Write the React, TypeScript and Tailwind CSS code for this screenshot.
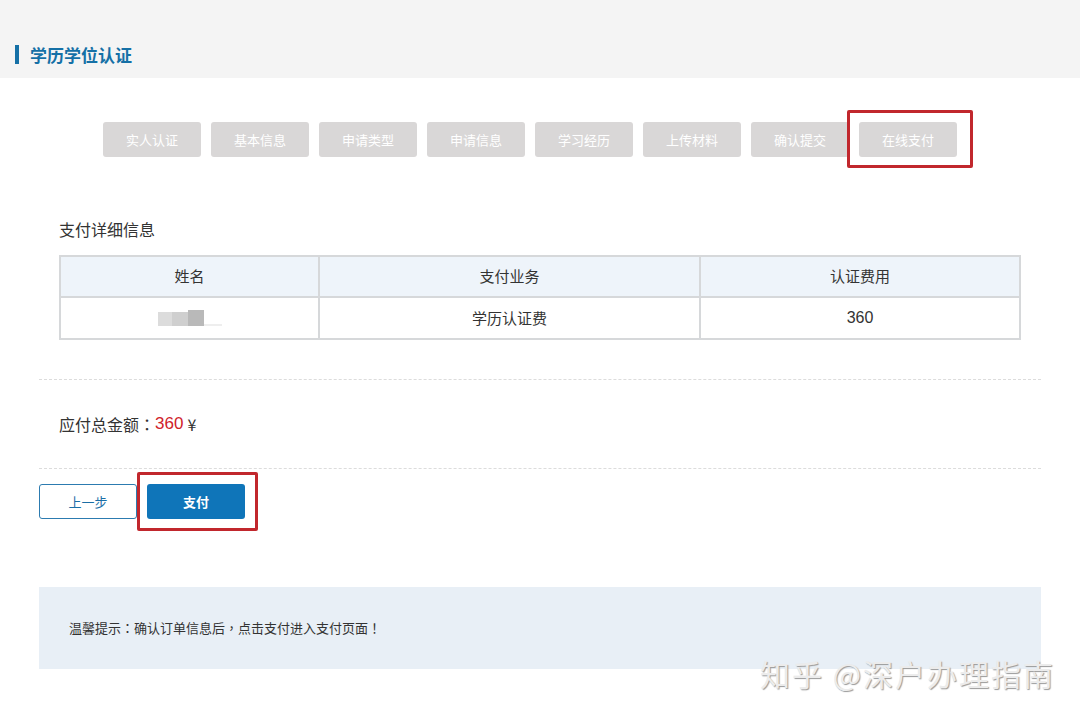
const steps = ["实人认证", "基本信息", "申请类型", "申请信息", "学习经历", "上传材料", "确认提交", "在线支付"];

const font = { fontFamily: '"Noto Sans CJK SC", "Liberation Sans", sans-serif' };
const punct = { fontFamily: '"Noto Sans CJK TC", sans-serif' };
const latin = { fontFamily: '"Liberation Sans", sans-serif' };

export default function App() {
  return (
    <div className="relative w-[1080px] h-[718px] bg-white overflow-hidden text-[#333]" style={font}>
      {/* 顶部标题 */}
      <div className="h-[78px] bg-[#f4f4f4] flex items-end pb-[14px] pl-[15px]">
        <div className="flex items-center gap-[11px]">
          <div className="w-[4px] h-[19px] bg-[#1570a6]" />
          <div className="text-[17px] font-bold text-[#1570a6] leading-none">学历学位认证</div>
        </div>
      </div>

      {/* 步骤 */}
      <div className="flex gap-[10px] pl-[103px] pt-[44px]">
        {steps.map((s, i) => {
          const last = i === steps.length - 1;
          const btn = (
            <div className="w-[98px] h-[35px] rounded-[3px] bg-[#d9d7d7] text-white text-[13px] flex items-center justify-center">
              {s}
            </div>
          );
          return last ? (
            <div key={s} className="relative">
              {btn}
              <div className="absolute left-[-12px] top-[-12px] w-[126px] h-[58px] border-[3px] border-[#c1272d] rounded-[2px]" />
            </div>
          ) : (
            <div key={s}>{btn}</div>
          );
        })}
      </div>

      {/* 支付详细信息 */}
      <div className="px-[39px] mt-[64px]">
        <div className="pl-[20px] text-[16px] leading-none">支付详细信息</div>
        <div className="ml-[20px] mr-[20px] mt-[18px] border-2 border-[#d6d8da] text-[15px]">
          <div className="grid grid-cols-[259px_381px_1fr] h-[41px] bg-[#eef4fa] border-b-2 border-[#d6d8da]">
            <div className="flex items-center justify-center border-r-2 border-[#d6d8da]">姓名</div>
            <div className="flex items-center justify-center border-r-2 border-[#d6d8da]">支付业务</div>
            <div className="flex items-center justify-center">认证费用</div>
          </div>
          <div className="grid grid-cols-[259px_381px_1fr] h-[40px]">
            <div className="flex items-center justify-center border-r-2 border-[#d6d8da]">
              <div className="flex items-end">
                <div className="w-[14px] h-[14px] bg-[#dcdcdc]" />
                <div className="w-[16px] h-[14px] bg-[#cfcfcf]" />
                <div className="w-[16px] h-[16px] bg-[#b9b9b9]" />
                <div className="w-[18px] h-[2px] bg-[#eeeeee]" />
              </div>
            </div>
            <div className="flex items-center justify-center border-r-2 border-[#d6d8da]">学历认证费</div>
            <div className="flex items-center justify-center text-[16px]" style={latin}>360</div>
          </div>
        </div>

        <div className="mt-[39px] border-t border-dashed border-[#dcdcdc]" />
        <div className="pl-[20px] h-[88px] flex items-center text-[16px]">
          应付总金额<span style={punct}>：</span>
          <span className="text-[#d0222a] text-[17px]" style={latin}>360</span>
          <span className="ml-[4px]">¥</span>
        </div>
        <div className="border-t border-dashed border-[#dcdcdc]" />

        <div className="flex gap-[10px] mt-[15px]">
          <div className="w-[98px] h-[35px] rounded-[3px] border border-[#2c7bb0] text-[#1a6ea6] text-[13px] flex items-center justify-center">
            上一步
          </div>
          <div className="relative">
            <div className="w-[98px] h-[35px] rounded-[3px] bg-[#0f75b9] text-white text-[13px] font-bold flex items-center justify-center">
              支付
            </div>
            <div className="absolute left-[-10px] top-[-12px] w-[121px] h-[59px] border-[3px] border-[#c1272d] rounded-[2px]" />
          </div>
        </div>

        <div className="mt-[68px] h-[82px] bg-[#e8eff6] flex items-center pl-[30px] text-[13px]">
          温馨提示<span style={punct}>：</span>确认订单信息后<span style={punct}>，</span>点击支付进入支付页面<span style={punct}>！</span>
        </div>
      </div>

      {/* 水印 */}
      <div
        className="absolute left-[760px] top-[658px] text-[30px] leading-none text-[#ececec] tracking-[2px]"
        style={{ textShadow: "1px 1px 1px #9a9a9a" }}
      >
        知乎 @深户办理指南
      </div>
    </div>
  );
}
